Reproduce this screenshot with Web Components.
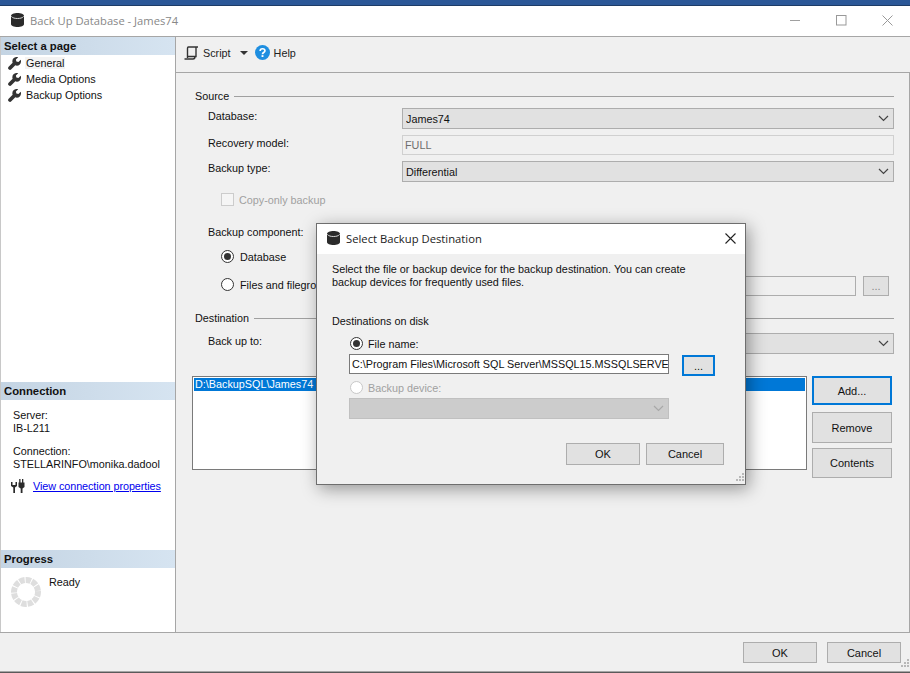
<!DOCTYPE html>
<html><head><meta charset="utf-8"><title>Back Up Database</title>
<style>
html,body{margin:0;padding:0;background:#f0f0f0;overflow:hidden}
</style></head><body>
<bk-window>
  <bk-titlebar slot="title">Back Up Database - James74</bk-titlebar>
  <bk-sidebar slot="side">
    <bk-section heading="Select a page" style="height:345px">
      <bk-nav current>General</bk-nav>
      <bk-nav>Media Options</bk-nav>
      <bk-nav>Backup Options</bk-nav>
    </bk-section>
    <bk-section heading="Connection" style="height:168px">
      <bk-conn></bk-conn>
    </bk-section>
    <bk-section heading="Progress" style="height:82px">
      <bk-progress>Ready</bk-progress>
    </bk-section>
  </bk-sidebar>
  <bk-toolbar slot="tools"></bk-toolbar>
  <bk-form slot="form"></bk-form>
  <bk-footer slot="foot"></bk-footer>
  <bk-dialog slot="over"></bk-dialog>
</bk-window>

<script>
const FS = '10.8px';
const FONT = '"Liberation Sans", Arial, sans-serif';
const UI = '"Open Sans", "Noto Sans", sans-serif';
const DB = `<svg width="13" height="14" viewBox="0 0 13 14"><path fill="#2b2b2b" d="M0 3C0 1.2 3 0 6.5 0S13 1.2 13 3v8c0 1.8-3 3-6.5 3S0 12.8 0 11z"/><path fill="none" stroke="#e8e8e8" stroke-width=".9" d="M.3 3.4C1.5 5 4 5.5 6.5 5.5s5-.5 6.2-2.1"/></svg>`;
function def(name, css, html){
  class C extends HTMLElement{
    constructor(){super();const r=this.attachShadow({mode:'open'});
      r.innerHTML=`<style>${css}</style>`+(typeof html==='function'?html(this):html);}
  }
  customElements.define(name,C);
}
def('bk-button',`:host{display:inline-flex;box-sizing:border-box;align-items:center;justify-content:center;background:#e1e1e1;border:1px solid #adadad;font:11px ${FONT};color:#111;width:var(--w,75px);height:var(--h,22px);flex:none}
:host([focus]){border:2px solid #0078d7}`,`<slot></slot>`);
def('bk-select',`:host{display:flex;box-sizing:border-box;align-items:center;height:21px;background:#e1e1e1;border:1px solid #adadad;font:${FS} ${FONT};color:#111;padding:0 3px;position:relative}
:host([disabled]){background:#ccc;border-color:#c0c0c0}
span{flex:1;white-space:nowrap;overflow:hidden}
svg{flex:none;margin-right:1px}
:host([disabled]) path{stroke:#a8a8a8}`,`<span><slot></slot></span><svg width="11" height="7" viewBox="0 0 11 7"><path d="M1 1l4.5 4.5L10 1" fill="none" stroke="#444" stroke-width="1.2"/></svg>`);
def('bk-input',`:host{display:flex;box-sizing:border-box;align-items:center;height:20px;background:#fff;border:1px solid #7a7a7a;font:${FS} ${FONT};color:#111;padding:0 2px;overflow:hidden;white-space:nowrap}
:host([readonly]){background:#f0f0f0;border-color:#d0d0d0;color:#6d6d6d}`,`<slot></slot>`);
def('bk-radio',`:host{display:flex;align-items:center;font:${FS} ${FONT};color:#111;white-space:nowrap;gap:var(--g,6px)}
:host([disabled]){color:#a0a0a0}
i{display:flex;align-items:center;justify-content:center;box-sizing:border-box;width:13px;height:13px;border:1px solid #333;border-radius:50%;background:#fff;flex:none}
:host([disabled]) i{border-color:#c8c8c8}
:host([checked]) i::after{content:"";width:7px;height:7px;border-radius:50%;background:#333}`,`<i></i><span><slot></slot></span>`);
def('bk-legend',`:host{display:flex;align-items:center;gap:5px;font:${FS} ${FONT};color:#111;height:14px}
b{flex:1;height:1px;background:#a0a0a0}`,`<span><slot></slot></span><b></b>`);
def('bk-row',`:host{display:grid;grid-template-columns:194px 1fr;align-items:start;padding-left:13px;font:${FS} ${FONT};color:#111}
.l{padding-top:var(--lt,1px)}`,`<div class="l"><slot name="l"></slot></div><div><slot></slot></div>`);
def('bk-titlebar',`:host{display:flex;align-items:center;height:31px;box-sizing:border-box;padding:0 0 2px 11px;gap:6px;background:#fff;font:11.2px ${UI};color:#888;border-bottom:1px solid #a6a6a6;flex:none}
.t{flex:1}
.c{display:flex;align-items:center;padding-right:17px;gap:35px}`,
`${DB}<span class="t"><slot></slot></span><div class="c">
<svg width="11" height="11" viewBox="0 0 11 11"><path d="M0 5.5h10" stroke="#a0a0a0" fill="none"/></svg>
<svg width="11" height="11" viewBox="0 0 11 11"><rect x=".5" y=".5" width="9.5" height="9.5" fill="none" stroke="#999"/></svg>
<svg width="11" height="11" viewBox="0 0 11 11"><path d="M.5.5l10 10M10.5.5l-10 10" stroke="#999" fill="none"/></svg></div>`);
def('bk-sidebar',`:host{display:flex;flex-direction:column;width:174px;background:#fff;flex:none;border-right:1px solid #a6a6a6}`,`<slot></slot>`);
def('bk-section',`:host{display:block;box-sizing:border-box;font:${FS} ${FONT};color:#111}
h2{margin:0;height:18px;padding-left:3px;font:bold 11.3px/18px ${FONT};color:#111;background:linear-gradient(90deg,#c4d4e3,#d6e4f1)}`,
t=>`<h2>${t.getAttribute('heading')}</h2><slot></slot>`);
const WR=`<svg width="13" height="13" viewBox="0 0 16 16" style="flex:none"><path fill="#333" d="M15.7 3.4l-2.9 2.8-2.5-.6-.6-2.5L12.5.3C10.6-.4 8.3 0 6.8 1.5 5.3 3 5 5.2 5.7 7L.8 11.9c-1 1-1 2.4 0 3.3s2.4 1 3.3 0L9 10.3c1.8.7 4 .4 5.5-1.1 1.5-1.5 1.9-3.9 1.2-5.8z"/></svg>`;
def('bk-nav',`:host{display:flex;align-items:center;height:16px;padding-left:7px;gap:4px;font:${FS} ${FONT};color:#111}
span{padding:0 1px}
:host([current]) span{background:#f3f3f3}`,`${WR}<span><slot></slot></span>`);
def('bk-conn',`:host{display:block;padding:9px 0 0 12px;font:${FS}/13px ${FONT};color:#111}
p{margin:0 0 10px}
.lk{display:flex;align-items:center;gap:8px;margin:5px 0 0 -2px}
a{color:#0000ee;text-decoration:underline;letter-spacing:-.06px}`,
`<p>Server:<br>IB-L211</p><p style="margin-bottom:8px">Connection:<br>STELLARINFO\\monika.dadool</p>
<div class="lk"><svg width="14" height="14" viewBox="0 0 14 14"><g fill="#2b2b2b"><path d="M0 3h1.5v3h3V3H6v4L4 8.5V14H2.3V8.5L0 7z"/><path d="M8.2 0h1.3v3.5H11V0h1.300v3.500h1.200V8l-2 1.500V14H9.700V9.500L7.500 8V3.500h.7z"/></g></svg><a href="#" onclick="return false">View connection properties</a></div>`);
def('bk-progress',`:host{display:flex;padding:8px 0 0 10px;gap:8px;font:${FS} ${FONT};color:#111}`,
`<svg width="30" height="30" viewBox="0 0 30 30" style="flex:none;margin-top:1px"><circle cx="15" cy="15" r="12" fill="none" stroke="#dedede" stroke-width="6" stroke-dasharray="5.3 1" transform="rotate(-4 15 15)"/></svg><span><slot></slot></span>`);
def('bk-toolbar',`:host{display:flex;align-items:center;height:36px;box-sizing:border-box;padding:0 0 4px 8px;background:#f0f0f0;border-bottom:1px solid #a6a6a6;font:${FS} ${FONT};color:#222;flex:none}`,
`<svg width="15" height="14" viewBox="0 0 15 14"><path d="M4.5 1H14M4.5 1C3.5 1 3.5 2 3.500 3v9M12 1.500v9H3.500M.5 13H9c1.500 0 2-.8 2-2.500" fill="none" stroke="#333" stroke-width="1.4"/></svg>
<span style="margin-left:4px">Script</span>
<svg width="8" height="4" viewBox="0 0 8 4" style="margin-left:9px"><path d="M0 0h8L4 4z" fill="#333"/></svg>
<svg width="15" height="15" viewBox="0 0 16 16" style="margin-left:7px"><circle cx="8" cy="8" r="8" fill="#1e8ee0"/><path d="M5.5 6.3C5.5 4.8 6.6 4 8 4s2.600.8 2.600 2.200c0 1.900-2.600 1.800-2.600 3.600" fill="none" stroke="#fff" stroke-width="1.8"/><rect x="7" y="10.8" width="2" height="2" fill="#fff"/></svg>
<span style="margin-left:4px">Help</span>`);
def('bk-form',`:host{display:flex;flex-direction:column;flex:1;box-sizing:border-box;padding:16px 15px 0 19px;background:#f0f0f0;border-right:1px solid #a6a6a6;font:${FS} ${FONT};color:#111;min-height:0}
.chk{display:flex;align-items:center;gap:5px;color:#a0a0a0;margin:11px 0 0 26px}
.chk i{width:13px;height:13px;box-sizing:border-box;border:1px solid #ccc;background:#f5f5f5;display:block}
.lab{margin:20px 0 0 13px}
.opt{margin-left:26px}
.frow{display:flex;align-items:flex-start}
.frow bk-radio{margin-top:2px}
.frow bk-input{margin-left:auto;width:454px;background:#f0f0f0;border-color:#adadad}
.ell{margin:0 5px 0 7px}
.lst{display:flex;gap:5px;margin:22px 2px 0 -3px}
.box{flex:1;height:94px;box-sizing:border-box;border:1px solid #7a7a7a;background:#fff;padding:1px;overflow:hidden}
.sel{background:#0078d7;color:#fff;height:13px;line-height:13px;padding-left:1px;white-space:nowrap}
.btns{display:flex;flex-direction:column;flex:none}`,
`<bk-legend>Source</bk-legend>
<bk-row style="margin-top:5px;--lt:2px"><span slot="l">Database:</span><bk-select>James74</bk-select></bk-row>
<bk-row style="margin-top:6px;--lt:2px"><span slot="l">Recovery model:</span><bk-input readonly>FULL</bk-input></bk-row>
<bk-row style="margin-top:6px;--lt:1px"><span slot="l">Backup type:</span><bk-select>Differential</bk-select></bk-row>
<div class="chk"><i></i><span>Copy-only backup</span></div>
<div class="lab">Backup component:</div>
<bk-radio class="opt" checked style="margin-top:12px">Database</bk-radio>
<div class="frow" style="margin-top:13px"><bk-radio class="opt">Files and filegroups:</bk-radio><bk-input></bk-input><bk-button class="ell" style="--w:26px;--h:20px;color:#888">...</bk-button></div>
<bk-legend style="margin-top:15px">Destination</bk-legend>
<bk-row style="margin-top:8px;--lt:2px"><span slot="l">Back up to:</span><bk-select></bk-select></bk-row>
<div class="lst"><div class="box"><div class="sel">D:\\BackupSQL\\James74</div></div>
<div class="btns"><bk-button focus style="--w:80px;--h:29px">Add...</bk-button><bk-button style="--w:80px;--h:31px;margin-top:7px">Remove</bk-button><bk-button style="--w:80px;--h:30px;margin-top:5px">Contents</bk-button></div></div>`);
const GRIP=`<svg width="8" height="8" viewBox="0 0 8 8"><g fill="#b8b8b8"><rect x="6" y="0" width="2" height="2"/><rect x="3" y="3" width="2" height="2"/><rect x="6" y="3" width="2" height="2"/><rect x="0" y="6" width="2" height="2"/><rect x="3" y="6" width="2" height="2"/><rect x="6" y="6" width="2" height="2"/></g></svg>`;
def('bk-footer',`:host{display:flex;align-items:flex-start;justify-content:flex-end;gap:10px;height:40px;box-sizing:border-box;padding:9px 9px 0 0;background:#f0f0f0;border-top:1px solid #a6a6a6;border-bottom:1px solid #a6a6a6;position:relative;flex:none}
bk-button{--w:74px;--h:21px}
.g{position:absolute;right:1px;bottom:0}`,
`<bk-button>OK</bk-button><bk-button>Cancel</bk-button><div class="g">${GRIP}</div>`);
def('bk-dialog',`:host{position:absolute;left:316px;top:223px;width:430px;height:262px;box-sizing:border-box;display:flex;flex-direction:column;background:#f0f0f0;border:1px solid #6e6e6e;box-shadow:3px 4px 16px rgba(0,0,0,.38);font:${FS} ${FONT};color:#111;--g:5px}
.hd{display:flex;align-items:center;height:30px;box-sizing:border-box;padding:0 0 2px 10px;flex:none;background:#fff;gap:6px;font:11.25px ${UI};color:#222}
.hd span{flex:1}
.hd svg:last-child{margin-right:9px}
.bd{flex:1;display:flex;flex-direction:column;padding:9px 21px 0 15px;position:relative}
p{margin:0;line-height:13px}
.opt{margin:0 0 0 18px}
.rw{display:flex;align-items:flex-start;margin:4px 0 0 17px}
.rw bk-input{width:320px;flex:none}
.acts{display:flex;justify-content:flex-end;gap:6px;margin-top:24px}
.g{position:absolute;right:1px;bottom:1px}`,
`<div class="hd">${DB}<span>Select Backup Destination</span><svg width="11" height="11" viewBox="0 0 11 11"><path d="M.5.5l10 10M10.5.5l-10 10" stroke="#222" fill="none" stroke-width="1.1"/></svg></div>
<div class="bd"><p>Select the file or backup device for the backup destination. You can create<br>backup devices for frequently used files.</p>
<p style="margin-top:26px">Destinations on disk</p>
<bk-radio class="opt" checked style="margin-top:9px">File name:</bk-radio>
<div class="rw"><bk-input>C:\\Program Files\\Microsoft SQL Server\\MSSQL15.MSSQLSERVE</bk-input><bk-button focus style="--w:33px;--h:21px;margin:1px 0 0 13px">...</bk-button></div>
<bk-radio class="opt" disabled style="margin-top:5px">Backup device:</bk-radio>
<bk-select disabled style="width:320px;margin:4px 0 0 17px"></bk-select>
<div class="acts"><bk-button style="--w:74px">OK</bk-button><bk-button style="--w:78px">Cancel</bk-button></div>
<div class="g">${GRIP}</div></div>`);
def('bk-window',`:host{display:flex;flex-direction:column;position:relative;width:910px;height:673px;overflow:hidden;background:#f0f0f0}
.top{height:6px;flex:none;background:#2b5797;border-bottom:1px solid #1d3b66;box-sizing:border-box}
.main{display:flex;flex:none;height:595px;padding-left:1px;box-sizing:border-box;background:#c8c8c8;overflow:hidden}
.r{flex:1;display:flex;flex-direction:column;min-width:0}
.end{flex:1;background:#5a5a5a}`,
`<div class="top"></div><slot name="title"></slot>
<div class="main"><slot name="side"></slot><div class="r"><slot name="tools"></slot><slot name="form"></slot></div></div>
<slot name="foot"></slot><div class="end"></div><slot name="over"></slot>`);
</script>
</body></html>
